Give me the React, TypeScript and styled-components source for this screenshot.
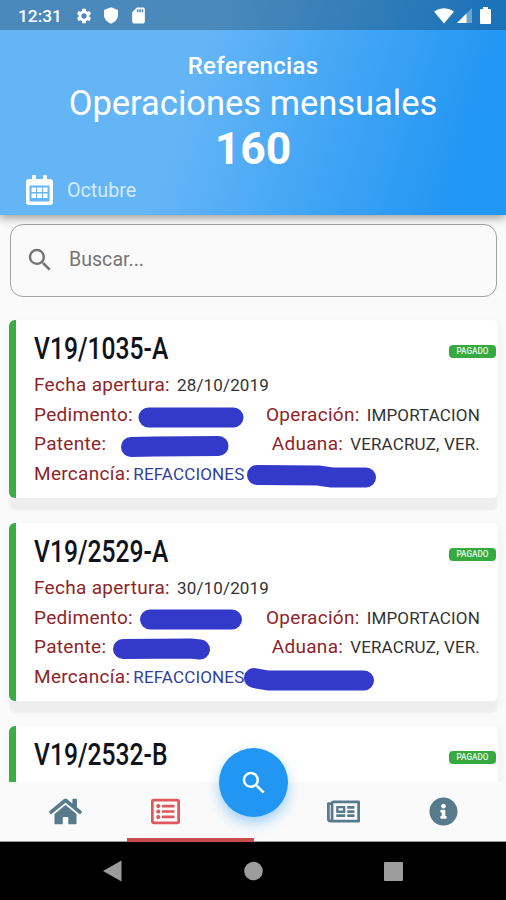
import React from "react";
import styled, { createGlobalStyle } from "styled-components";
import { MdSearch, MdSettings, MdSdCard } from "react-icons/md";
import {
  FaHome,
  FaInfoCircle,
  FaRegListAlt,
  FaRegNewspaper,
} from "react-icons/fa";

const GlobalStyle = createGlobalStyle`
  * { box-sizing: border-box; }
  body { margin: 0; background: #fafafa; font-family: Roboto, sans-serif; }
  svg { display: block; flex: none; }
`;

const Screen = styled.div`
  width: 506px;
  height: 900px;
  display: flex;
  flex-direction: column;
  overflow: hidden;
  background: #fafafa;
`;

const Top = styled.div`
  height: 215px;
  flex: none;
  display: flex;
  flex-direction: column;
  color: #fff;
  background: linear-gradient(108deg, #64b5f6 38%, #2196f3 90%);
  box-shadow: 0 3px 9px rgba(0, 0, 0, 0.38);
  z-index: 1;
`;

const StatusBar = styled.div`
  height: 30px;
  display: flex;
  justify-content: space-between;
  align-items: center;
  padding: 1px 15px 0 18px;
  background: rgba(0, 0, 0, 0.245);
`;

const StatusGroup = styled.div`
  display: flex;
  align-items: center;
`;

const Clock = styled.span`
  width: 57px;
  font-size: 17.3px;
  font-weight: 500;
`;

const StatusIcon = styled.span<{ $gap?: number }>`
  margin-right: ${(p) => p.$gap ?? 0}px;
`;

const Header = styled.header`
  flex: 1;
  display: flex;
  flex-direction: column;
  align-items: center;
  padding-top: 20px;
`;

const Section = styled.div`
  font-size: 24px;
  line-height: 32px;
  font-weight: 500;
  letter-spacing: 0.3px;
`;

const Heading = styled.div`
  font-size: 34.5px;
  line-height: 43px;
`;

const Total = styled.div`
  font-size: 44.5px;
  line-height: 49px;
  font-weight: 700;
`;

const Month = styled.div`
  align-self: stretch;
  display: flex;
  align-items: center;
  gap: 14px;
  height: 32px;
  padding-left: 26px;
  font-size: 19.7px;
`;

const MonthName = styled.span`
  opacity: 0.72;
`;

const List = styled.main`
  flex: 1;
  min-height: 0;
  overflow: hidden;
  padding: 9px 8px 0 9px;
  display: flex;
  flex-direction: column;
`;

const SearchBox = styled.div`
  height: 73px;
  flex: none;
  margin: 0 0 23px 1px;
  width: 487px;
  display: flex;
  align-items: center;
  gap: 14px;
  padding: 0 0 2px 14px;
  border: 1px solid #a3a3a3;
  border-radius: 13px;
  color: #757575;
  font-size: 19.6px;
`;

const Card = styled.article`
  position: relative;
  flex: none;
  height: 178px;
  margin-bottom: 25px;
  padding: 7px 18px 0 18px;
  border-left: 7px solid #3cac44;
  border-radius: 6px;
  background: #fff;
  box-shadow: 0 13px 2px -1px #eee, 2px 3px 10px rgba(0, 0, 0, 0.045);
`;

const CardHead = styled.div`
  display: flex;
  align-items: center;
  justify-content: space-between;
  height: 43px;
  margin-right: -16px;
`;

const Code = styled.h2`
  margin: 0;
  font-size: 31px;
  line-height: 42px;
  font-weight: 500;
  color: #10131b;
  transform: scaleX(0.795);
  transform-origin: left;
  white-space: nowrap;
`;

const Badge = styled.span`
  width: 47px;
  height: 13px;
  margin-top: 6px;
  border-radius: 4px;
  background: #36a93f;
  color: #e6f7e7;
  font-size: 8.2px;
  line-height: 13px;
  font-weight: 500;
  text-align: center;
`;

const Row = styled.div`
  display: flex;
  justify-content: space-between;
  height: 29.6px;
  line-height: 29.6px;
  white-space: nowrap;
`;

const Field = styled.div<{ $gap?: number }>`
  display: flex;
  align-items: baseline;
  gap: ${(p) => p.$gap ?? 7}px;
`;

const Label = styled.span`
  font-size: 19px;
  letter-spacing: 0.3px;
  color: #8e2428;
`;

const Value = styled.span<{ $blue?: boolean }>`
  font-size: 17px;
  letter-spacing: 0.15px;
  color: ${(p) => (p.$blue ? "#303f9f" : "#333")};
`;

const Marks = styled.svg`
  position: absolute;
  left: -7px;
  top: 0;
  fill: none;
  stroke: #3339c9;
  stroke-width: 20px;
  stroke-linecap: round;
  stroke-linejoin: round;
`;

const TabBar = styled.nav`
  position: relative;
  flex: none;
  height: 60px;
  display: grid;
  grid-template-columns: 131px 69px 106px 74px 126px;
  align-items: center;
  justify-items: center;
  background: #fafafa;
  border-bottom: 1px solid #999;
  color: #587b8c;
  z-index: 2;
`;

const Tab = styled.div<{ $active?: boolean }>`
  color: ${(p) => (p.$active ? "#df585d" : "inherit")};
`;

const Indicator = styled.div`
  position: absolute;
  left: 127px;
  bottom: -1px;
  width: 127px;
  height: 4px;
  background: #c84b50;
`;

const SearchButton = styled.div`
  position: absolute;
  left: 219px;
  top: -34px;
  width: 69px;
  height: 69px;
  display: grid;
  place-items: center;
  border-radius: 50%;
  background: #2196f3;
  color: #fff;
  box-shadow: 0 6px 13px rgba(33, 150, 243, 0.42);
`;

const SystemBar = styled.div`
  flex: none;
  height: 58px;
  display: flex;
  align-items: center;
  justify-content: center;
  background: #000;
`;

type Reference = {
  code: string;
  date?: string;
  marks?: string[];
};

const cards: Reference[] = [
  {
    code: "V19/1035-A",
    date: "28/10/2019",
    marks: [
      "M148.5 97.5H233.5",
      "M131 127L154 126.5L218.5 126",
      "M257 155L318 155.5L332 157.5H366",
    ],
  },
  {
    code: "V19/2529-A",
    date: "30/10/2019",
    marks: ["M150 96.5H232", "M123 126L190 125.5L200 126.5", "M254 155L268 157.5H364"],
  },
  { code: "V19/2532-B" },
];

function CalendarIcon() {
  return (
    <svg width="27" height="30" viewBox="0 0 27 30" fill="#fff">
      <path
        fillRule="evenodd"
        d="M6 1Q6 0 7 0H9Q10 0 10 1V4H17V1Q17 0 18 0H20Q21 0 21 1V4H24Q27 4 27 7V27Q27 30 24 30H3Q0 30 0 27V7Q0 4 3 4H6ZM3.5 10.5V26.5H23.5V10.5Z"
      />
      <path d="M5.5 12.5h4.6v4.6h-4.6zM11.2 12.5h4.6v4.6h-4.6zM16.9 12.5h4.6v4.6h-4.6zM5.5 18.4h4.6v4.6h-4.6zM11.2 18.4h4.6v4.6h-4.6zM16.9 18.4h4.6v4.6h-4.6z" />
    </svg>
  );
}

export default function App() {
  return (
    <Screen>
      <GlobalStyle />
      <Top>
        <StatusBar>
          <StatusGroup>
            <Clock>12:31</Clock>
            <StatusIcon $gap={10}><MdSettings size={18} /></StatusIcon>
            <StatusIcon $gap={10}>
              <svg width="16" height="17" viewBox="0 0 16 17">
                <path d="M8 .3 15 3V8C15 12 12 15.2 8 16.7 4 15.2 1 12 1 8V3Z" fill="#fff" />
              </svg>
            </StatusIcon>
            <StatusIcon><MdSdCard size={19} /></StatusIcon>
          </StatusGroup>
          <StatusGroup>
            <StatusIcon $gap={3}>
              <svg width="20" height="16" viewBox="0 0 20 16">
                <path d="M0 3.5Q10-3.2 20 3.5L10 15.5Z" fill="#fff" />
              </svg>
            </StatusIcon>
            <StatusIcon $gap={8}>
              <svg width="15" height="15" viewBox="0 0 15 15">
                <path d="M15 0V15H0Z" fill="#fff" opacity=".35" />
                <path d="M9.5 5.5V15H0Z" fill="#fff" />
              </svg>
            </StatusIcon>
            <StatusIcon>
              <svg width="11" height="17" viewBox="0 0 11 17">
                <path d="M3 0H8V2H10Q11 2 11 3V16Q11 17 10 17H1Q0 17 0 16V3Q0 2 1 2H3Z" fill="#fff" />
              </svg>
            </StatusIcon>
          </StatusGroup>
        </StatusBar>
        <Header>
          <Section>Referencias</Section>
          <Heading>Operaciones mensuales</Heading>
          <Total>160</Total>
          <Month>
            <CalendarIcon />
            <MonthName>Octubre</MonthName>
          </Month>
        </Header>
      </Top>

      <List>
        <SearchBox>
          <MdSearch size={30} />
          <span>Buscar...</span>
        </SearchBox>
        {cards.map((c) => (
          <Card key={c.code}>
            <CardHead>
              <Code>{c.code}</Code>
              <Badge>PAGADO</Badge>
            </CardHead>
            {c.date && (
              <>
                <Row>
                  <Field><Label>Fecha apertura:</Label><Value>{c.date}</Value></Field>
                </Row>
                <Row>
                  <Field><Label>Pedimento:</Label></Field>
                  <Field><Label>Operación:</Label><Value>IMPORTACION</Value></Field>
                </Row>
                <Row>
                  <Field><Label>Patente:</Label></Field>
                  <Field><Label>Aduana:</Label><Value>VERACRUZ, VER.</Value></Field>
                </Row>
                <Row>
                  <Field $gap={3}><Label>Mercancía:</Label><Value $blue>REFACCIONES</Value></Field>
                </Row>
              </>
            )}
            {c.marks && (
              <Marks width="489" height="178" viewBox="9 0 489 178">
                {c.marks.map((d) => <path key={d} d={d} />)}
              </Marks>
            )}
          </Card>
        ))}
      </List>

      <TabBar>
        <Tab><FaHome size={33} /></Tab>
        <Tab $active><FaRegListAlt size={29} /></Tab>
        <span />
        <Tab><FaRegNewspaper size={33} /></Tab>
        <Tab><FaInfoCircle size={29} /></Tab>
        <Indicator />
        <SearchButton><MdSearch size={30} /></SearchButton>
      </TabBar>

      <SystemBar>
        <svg width="506" height="58" viewBox="0 0 506 58" fill="#9c9c9c">
          <path d="M103 29 121.5 18.5V39.5Z" />
          <circle cx="253.5" cy="29" r="9.3" />
          <rect x="384" y="20" width="19" height="19" rx="1" />
        </svg>
      </SystemBar>
    </Screen>
  );
}
